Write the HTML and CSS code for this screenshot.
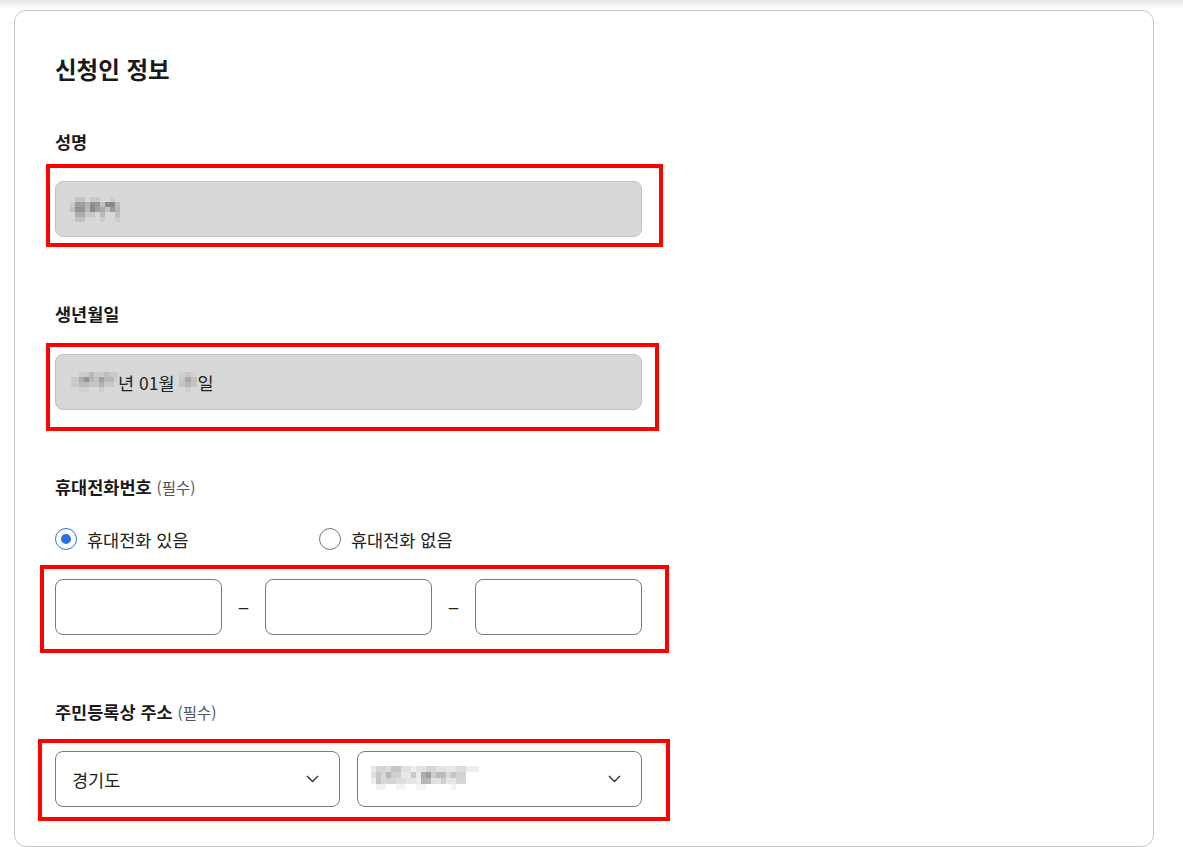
FILE: index.html
```html
<!DOCTYPE html>
<html lang="ko">
<head>
<meta charset="utf-8">
<link rel="stylesheet" href="styles.css">
</head>
<body>
<div class="topshade"></div>
<div class="card">
  <h2 class="title">신청인 정보</h2>

  <div class="field first">
    <div class="label">성명</div>
    <div class="marked">
      <div class="input disabled"><span class="mosaic mz-name"></span></div>
      <span class="mark m1"></span>
    </div>
  </div>

  <div class="field">
    <div class="label">생년월일</div>
    <div class="marked">
      <div class="input disabled"><span class="mosaic mz-year"></span>년 01월&nbsp;<span class="mosaic mz-day"></span>일</div>
      <span class="mark m2"></span>
    </div>
  </div>

  <div class="field">
    <div class="label">휴대전화번호 <span class="req">(필수)</span></div>
    <div class="radios">
      <label class="radio"><span class="dot checked"></span>휴대전화 있음</label>
      <label class="radio"><span class="dot"></span>휴대전화 없음</label>
    </div>
    <div class="marked">
      <div class="phone">
        <div class="input box"></div>
        <span class="dash">–</span>
        <div class="input box"></div>
        <span class="dash">–</span>
        <div class="input box"></div>
      </div>
      <span class="mark m3"></span>
    </div>
  </div>

  <div class="field">
    <div class="label">주민등록상 주소 <span class="req">(필수)</span></div>
    <div class="marked addr">
      <div class="selects">
        <div class="select">경기도<svg class="chev" width="13" height="8" viewBox="0 0 13 8"><path d="M1 1l5.5 5.5L12 1" fill="none" stroke="#333" stroke-width="1.4"/></svg></div>
        <div class="select"><span class="mosaic mz-city"></span><svg class="chev" width="13" height="8" viewBox="0 0 13 8"><path d="M1 1l5.5 5.5L12 1" fill="none" stroke="#333" stroke-width="1.4"/></svg></div>
      </div>
      <span class="mark m4"></span>
    </div>
  </div>
</div>
</body>
</html>
```

FILE: styles.css
```css
* { box-sizing: border-box; }
html, body { margin: 0; padding: 0; background: #fff; }
body {
  font-family: "Noto Sans CJK KR", "Noto Sans", sans-serif;
  color: #222;
  width: 1183px;
  height: 862px;
  overflow: hidden;
}
.topshade {
  height: 10px;
  background: linear-gradient(#e6e6e6, #fafafa 70%, #fff);
}
.card {
  margin-left: 14px;
  width: 1140px;
  height: 837px;
  border: 1px solid #c8c8c8;
  border-radius: 12px;
  padding: 41px 40px 0 40px;
}
.title {
  margin: 0;
  font-size: 23.5px;
  line-height: 34px;
  font-weight: 700;
  color: #1a1a1a;
}
.field { width: 587px; margin-top: 65px; }
.field.first { margin-top: 44px; }
.label {
  font-size: 17.5px;
  line-height: 24px;
  font-weight: 700;
  color: #1a1a1a;
}
.req { font-size: 15.5px; font-weight: 400; color: #555; }
.marked { position: relative; margin-top: 28px; }
.field.first .marked { margin-top: 27px; }
.marked.addr { margin-top: 27px; }
.mark {
  position: absolute;
  border: 4px solid #ff0000;
  pointer-events: none;
}
.m1 { top: -17px; left: -9px; right: -21px; bottom: -10px; }
.m2 { top: -11px; left: -9px; right: -17px; bottom: -21px; }
.m3 { top: -14px; left: -15px; right: -27px; bottom: -18px; }
.m4 { top: -12px; left: -17px; right: -28px; bottom: -14px; }
.input {
  height: 56px;
  border: 1px solid #7a7a7a;
  border-radius: 8px;
  display: flex;
  align-items: center;
  padding: 0 15px;
  font-size: 17.5px;
  color: #222;
}
.input.disabled {
  background: #d8d8d8;
  border-color: #c2c2c2;
}
.mosaic { display: inline-block; flex: none; }
.mz-name {
  width: 50px; height: 25px; margin-left: -1px;
  background:
    linear-gradient(90deg, transparent 0 5px, #c4c4c4 5px 15px, transparent 15px 20px, #cacaca 20px 30px, transparent 30px 40px, #cbcbcb 40px 45px, transparent 45px) 0 0/100% 5px no-repeat,
    linear-gradient(90deg, #c9c9c9 0 5px, #a09c9c 5px 15px, #b2b2b2 15px 20px, #8a8f94 20px 25px, #9a9a9a 25px 30px, #c2c2c2 30px 35px, #858a90 35px 45px, #bbbbbb 45px 50px) 0 5px/100% 5px no-repeat,
    linear-gradient(90deg, #c0c0c0 0 5px, #959292 5px 15px, #b8b8b8 15px 20px, #868a8e 20px 25px, #a0a0a0 25px 30px, #aca9a6 30px 35px, #c2c2c2 35px 40px, #959a9e 40px 45px, #b5b5b5 45px 50px) 0 10px/100% 5px no-repeat,
    linear-gradient(90deg, transparent 0 5px, #adadad 5px 15px, #c6c6c6 15px 25px, transparent 25px 30px, #b8b8b8 30px 35px, transparent 35px 45px, #bfbfbf 45px 50px) 0 15px/100% 5px no-repeat,
    linear-gradient(90deg, transparent 0 5px, #c2c2c2 5px 15px, transparent 15px 30px, #cbcbcb 30px 35px, transparent 35px 45px, #cacaca 45px 50px) 0 20px/100% 5px no-repeat;
}
.mz-year {
  width: 47px; height: 20px;
  background:
    linear-gradient(90deg, transparent 0 8px, #cdcdcd 8px 18px, #b9b9b9 18px 23px, #cacaca 23px 33px, #bdbdbd 33px 38px, #c8c8c8 38px 48px) 0 0/100% 5px no-repeat,
    linear-gradient(90deg, #c9c9c9 0 8px, #acacac 8px 13px, #939393 13px 18px, #b4b4b4 18px 23px, #c1c1c1 23px 28px, #9f9f9f 28px 33px, #b8b8b8 33px 43px, #cfcfcf 43px 48px) 0 5px/100% 5px no-repeat,
    linear-gradient(90deg, #cbcbcb 0 8px, #bbbbbb 8px 18px, #c6c6c6 18px 28px, #b0b0b0 28px 33px, #c9c9c9 33px 43px, transparent 43px) 0 10px/100% 5px no-repeat,
    linear-gradient(90deg, transparent 0 8px, #cfcfcf 8px 18px, transparent 18px 28px, #cccccc 28px 33px, transparent 33px) 0 15px/100% 5px no-repeat;
}
.mz-day {
  width: 18px; height: 20px;
  background:
    linear-gradient(90deg, #cfcfcf 0 6px, #c6c6c6 6px 12px, #d0d0d0 12px 18px) 0 0/100% 5px no-repeat,
    linear-gradient(90deg, #c8c8c8 0 6px, #a8a8a8 6px 12px, #bebebe 12px 18px) 0 5px/100% 5px no-repeat,
    linear-gradient(90deg, #c4c4c4 0 6px, #b6b6b6 6px 12px, #c2c4c8 12px 18px) 0 10px/100% 5px no-repeat,
    linear-gradient(90deg, transparent 0 6px, #cdcdcd 6px 12px, transparent 12px) 0 15px/100% 5px no-repeat;
}
.mz-city {
  width: 108px; height: 26px; margin-left: -3px;
  background:
    linear-gradient(90deg, #f0e6e2 0 5px, #d2d6da 5px 15px, #dcdcdc 15px 20px, #c3c6cb 20px 30px, #dfe2e4 30px 40px, #f2f0ea 40px 45px, #e3e3e3 45px 55px, #d8d5d3 55px 65px, #e2e2e2 65px 75px, #e7e7e7 75px 85px, #d9dde3 85px 95px, #eeeeee 95px 108px) 0 0/100% 6px no-repeat,
    linear-gradient(90deg, #e3dcd8 0 5px, #c5c8cc 5px 10px, #d8d8d8 10px 15px, #b6b6ba 15px 20px, #cfcfd2 20px 25px, #d7d0cc 25px 30px, #e6e9ea 30px 40px, #c8c8cc 40px 45px, #ebebeb 45px 50px, #b0acaa 50px 55px, #9f9c9b 55px 60px, #cdcdcd 60px 65px, #bcbcbf 65px 75px, #d8d8d8 75px 80px, #c3c3c3 80px 85px, #cfd2d6 85px 95px, transparent 95px) 0 6px/100% 6px no-repeat,
    linear-gradient(90deg, #eeeeee 0 5px, #c6c3c2 5px 10px, #dcd6d2 10px 15px, #d0d5d8 15px 25px, #dedede 25px 35px, #e5e5e5 35px 45px, #ededed 45px 50px, #b9b7b6 50px 60px, #e1e1e1 60px 70px, #cfcfcf 70px 75px, #e6e6e6 75px 85px, #d6d6d6 85px 95px, transparent 95px) 0 12px/100% 6px no-repeat,
    linear-gradient(90deg, transparent 0 5px, #f2f2f2 5px 15px, transparent 15px 25px, #f4f4f4 25px 35px, transparent 35px 45px, #f3f3f3 45px 55px, transparent 55px 80px, #f1f1f1 80px 85px, transparent 85px) 0 18px/100% 6px no-repeat;
}
.radios {
  display: flex;
  margin-top: 28px;
  height: 24px;
  align-items: center;
}
.radio {
  display: flex;
  align-items: center;
  gap: 10px;
  font-size: 17.5px;
  color: #222;
  width: 264px;
}
.dot {
  width: 22px;
  height: 22px;
  border-radius: 50%;
  border: 1.5px solid #777;
  background: #fff;
  position: relative;
  flex: none;
}
.dot.checked { border-color: #2c6fe5; }
.dot.checked::after {
  content: "";
  position: absolute;
  left: 50%; top: 50%;
  width: 10px; height: 10px;
  margin: -5px 0 0 -5px;
  border-radius: 50%;
  background: #2c6fe5;
}
.radios + .marked { margin-top: 28px; }
.phone {
  display: flex;
  align-items: center;
}
.box { width: 167px; flex: none; }
.dash {
  width: 43px;
  text-align: center;
  font-family: "Liberation Sans", sans-serif;
  font-size: 17px;
  line-height: 20px;
  color: #222;
  padding-top: 2px;
}
.selects { display: flex; gap: 17px; }
.select {
  flex: 1;
  height: 56px;
  border: 1px solid #7a7a7a;
  border-radius: 8px;
  display: flex;
  align-items: center;
  justify-content: space-between;
  padding: 0 20px 0 16px;
  font-size: 17.5px;
  color: #222;
}
.chev { flex: none; }
```
